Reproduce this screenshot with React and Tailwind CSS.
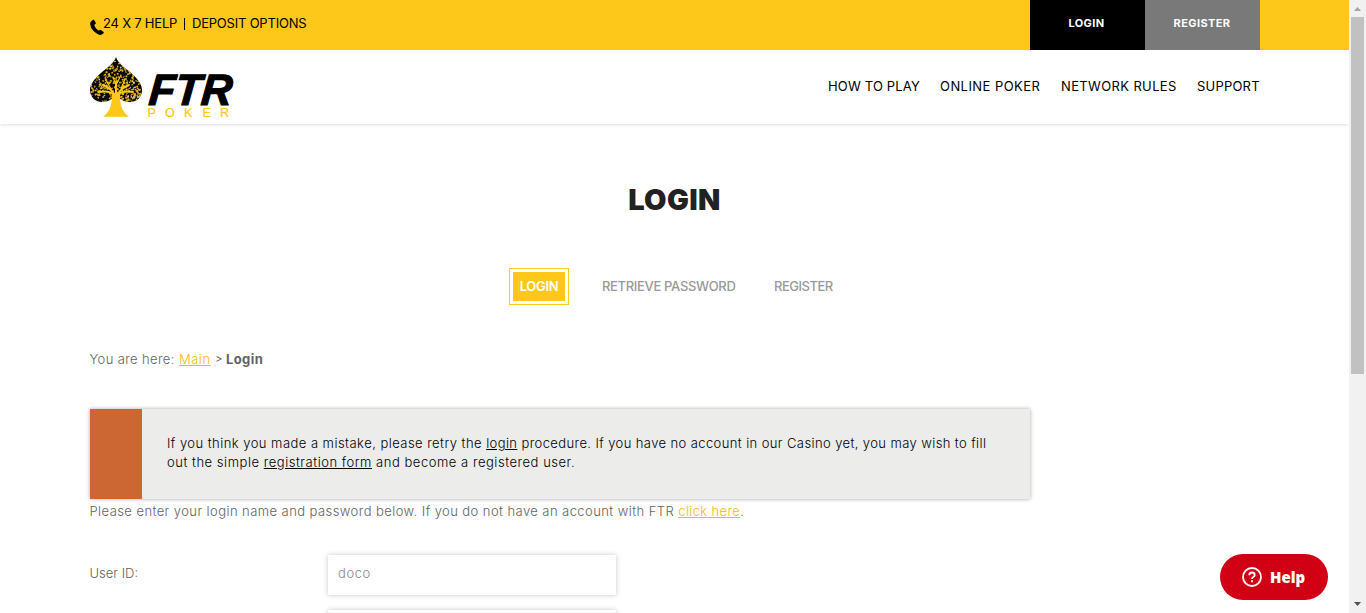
import React from "react";

function SpadeTree() {
  const leaves = [];
  let s = 7;
  const rnd = () => {
    s = (s * 16807) % 2147483647;
    return s / 2147483647;
  };
  for (let i = 0; i < 380; i++) {
    const x = rnd() * 52;
    const y = 3 + rnd() * 42;
    const r = rnd();
    leaves.push(
      <ellipse
        key={i}
        cx={x}
        cy={y}
        rx={0.5 + rnd() * 0.4}
        ry={1.1}
        fill={r > 0.87 ? "#c3cad8" : "#e3b31b"}
        transform={`rotate(${rnd() * 180} ${x} ${y})`}
      />
    );
  }
  return (
    <svg className="block shrink-0" width="52" height="60" viewBox="0 0 52 60">
      <defs>
        <clipPath id="crown">
          <path d="M26 0C24 6 18 10 12 15C5 21 0 27 0 33C0 40 5 45 12 45C17 45 21 43 24 40H28C31 43 35 45 40 45C47 45 52 40 52 33C52 27 47 21 40 15C34 10 28 6 26 0Z" />
        </clipPath>
      </defs>
      <g clipPath="url(#crown)">
        <rect width="52" height="46" fill="#0b0a08" />
        {leaves}
        <g fill="none" stroke="#fdc81a" strokeLinecap="round">
          <path strokeWidth="2" d="M26 42C25 36 20 31 13 28M26 42C27 36 32 31 39 28M26 40V25M25 38C20 34 14 34 9 35M27 38C32 34 38 34 43 35" />
          <path strokeWidth="1.200" d="M21 32L16 23M31 32L35 22M26 28L23 20M26 28L31 18" />
        </g>
      </g>
      <path fill="#fdc81a" d="M22 36H30C29.500 47 32 55 39 59.800H13C20 55 22.500 47 22 36Z" />
    </svg>
  );
}

function TopBar() {
  return (
    <div className="h-[50px] bg-[#fdc81a] shadow-[0_1px_5px_rgba(0,0,0,0.16)]">
      <div className="flex h-full w-[1260px] justify-between pl-[90px]">
        <div className="flex items-start pt-[13px] text-[13px] leading-5 tracking-[-0.21px] text-black">
          <svg className="mt-[6px] shrink-0" width="14" height="17" viewBox="0 0 14 17">
            <path d="M1 2.500L3 0.700Q3.600 0.300 4.100 1L5.700 3.800Q6 4.600 5.400 5L4.200 6Q5.300 9.500 8.300 11.600L9.700 10.900Q10.300 10.600 10.900 11.100L13.600 13.100Q14.100 13.700 13.500 14.200L11.900 15.500Q10.500 16.400 8 15.300Q1.500 12 0.200 5.500Q0 3.500 1 2.500Z" />
          </svg>
          <a className="-ml-px w-[75px] whitespace-nowrap">24 X 7 HELP</a>
          <span className="mt-[5px] ml-[6px] h-3 w-px bg-black" />
          <a className="ml-[7px] whitespace-nowrap">DEPOSIT OPTIONS</a>
        </div>
        <div className="flex text-[11px] leading-[46px] font-bold tracking-[0.4px] text-white">
          <a className="w-[115px] bg-black pr-[2px] text-center">LOGIN</a>
          <a className="w-[115px] bg-[#797979] pr-[1px] text-center">REGISTER</a>
        </div>
      </div>
    </div>
  );
}

function Header() {
  return (
    <header className="h-[74px] bg-white shadow-[0_1px_3px_rgba(0,0,0,0.12)]">
      <div className="flex w-[1260px] justify-between pt-[7px] pl-[90px]">
        <div className="flex">
          <SpadeTree />
          <svg className="ml-[6px] overflow-visible font-['Liberation_Sans']" width="90" height="66" viewBox="0 0 90 66">
            <text transform="translate(0 47.500) skewX(-5)" fontSize="44" fontWeight="700" fontStyle="italic" stroke="#000" strokeWidth="1.200" textLength="83" lengthAdjust="spacingAndGlyphs">FTR</text>
            <text y="60" fontSize="12.500" fill="#fdc81a" stroke="#fdc81a" strokeWidth="0.200" x="-0.500 17 36 54.500 72">POKER</text>
          </svg>
        </div>
        <nav className="flex gap-5 pt-[19px] text-[13px] leading-5 whitespace-nowrap text-black">
          <a className="w-[92px] tracking-[0.17px]">HOW TO PLAY</a>
          <a className="w-[101px] tracking-[0.44px]">ONLINE POKER</a>
          <a className="w-[116px] tracking-[0.36px]">NETWORK RULES</a>
          <a className="w-[63px] tracking-[0.2px]">SUPPORT</a>
        </nav>
      </div>
    </header>
  );
}

function Scrollbar() {
  return (
    <div className="flex w-[17px] shrink-0 flex-col items-center bg-[#f1f1f1]">
      <svg width="17" height="17" viewBox="0 0 17 17"><path d="M5 11H12L8.500 7Z" fill="#a3a3a3" /></svg>
      <div className="h-[357px] w-[13px] bg-[#c1c1c1]" />
      <svg className="mt-auto" width="17" height="17" viewBox="0 0 17 17"><path d="M5 6H12L8.500 10Z" fill="#505050" /></svg>
    </div>
  );
}

export default function App() {
  return (
    <div className="flex h-[613px] w-[1366px] overflow-hidden bg-white font-['Inter',sans-serif]">
      <div className="relative h-full w-[1349px] overflow-hidden">
        <TopBar />
        <Header />
        <main className="pl-[89.5px] text-[13px] text-[#636363]">
          <h1 className="mt-[58px] w-[1170px] text-center text-[29px] leading-9 font-black tracking-[0.4px] text-[#222]">LOGIN</h1>
          <div className="mt-[50px] flex h-[37px] pl-[419.5px] leading-[37px] font-medium whitespace-nowrap text-[#999]">
            <a className="h-[37px] w-[60px] border border-[#fdc81a] p-[3px]">
              <span className="block h-[29px] bg-[#fdc81a] text-center leading-[29px] font-semibold tracking-[-0.3px] text-white">LOGIN</span>
            </a>
            <a className="ml-[33px] w-[134px] tracking-[-0.33px]">RETRIEVE PASSWORD</a>
            <a className="ml-[38px] tracking-[-0.5px]">REGISTER</a>
          </div>
          <div className="mt-[44px] flex leading-5 whitespace-nowrap">
            <span className="w-[89.5px] font-light tracking-[0.38px]">You are here:</span>
            <a className="w-[32px] font-light tracking-[0.5px] text-[#fdb813] underline">Main</a>
            <span className="w-[15px] pl-px text-center text-[11px]">&gt;</span>
            <b className="tracking-[0.4px]">Login</b>
          </div>
          <div className="mt-[40px] ml-[0.5px] flex h-[90px] w-[940px] bg-[#ececeb] shadow-[0_0_4px_rgba(0,0,0,0.35)]">
            <div className="w-[52px] bg-[#cc6633]" />
            <div className="pt-[25px] pl-[25px] leading-[19px] font-light whitespace-nowrap text-black">
              <p className="tracking-[0.4px]">
                <span className="tracking-[0.46px]">If you think you made a mistake, please retry the </span>
                <a className="underline">login</a> procedure. If you have no account in our Casino yet, you may wish to fill
              </p>
              <p className="tracking-[0.53px]">out the simple <a className="underline">registration form</a> and become a registered user.</p>
            </div>
          </div>
          <p className="mt-[2px] leading-5 font-light tracking-[0.43px] whitespace-nowrap">
            Please enter your login name and password below. If you do not have an account with FTR <a className="tracking-[0.36px] text-[#fdb813] underline">click here</a>.
          </p>
          <div className="mt-[34px] flex font-light">
            <label className="w-[238.5px] leading-[37px]">User ID:</label>
            <div className="h-[40px] w-[288px] bg-white pl-[10px] leading-[37px] tracking-[0.6px] text-[#888] shadow-[0_0_5px_rgba(0,0,0,0.22)]">doco</div>
          </div>
          <div className="mt-[15px] flex pl-[238.5px]">
            <div className="h-[40px] w-[288px] bg-white shadow-[0_0_5px_rgba(0,0,0,0.22)]" />
          </div>
        </main>
        <button className="absolute top-[554px] left-[1220px] flex h-[46px] w-[108px] items-center rounded-full bg-[#d10014] pl-[22px] text-white">
          <svg width="20" height="20" viewBox="0 0 20 20" fill="none" stroke="#fff" strokeWidth="1.800">
            <circle cx="10" cy="10" r="9" />
            <path d="M7.300 8.200Q7.300 5.500 10 5.500Q12.700 5.500 12.700 7.900Q12.700 9.200 11.200 10Q10 10.600 10 12M10 13.300V15.200" />
          </svg>
          <span className="ml-[8px] font-['Noto_Sans'] text-[15px] font-black">Help</span>
        </button>
      </div>
      <Scrollbar />
    </div>
  );
}
